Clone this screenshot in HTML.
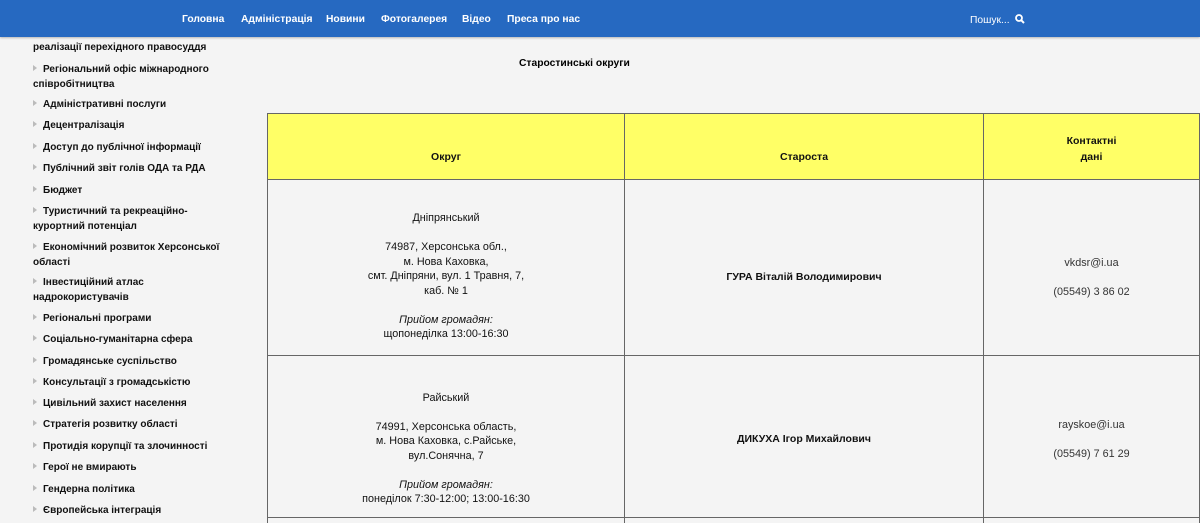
<!DOCTYPE html>
<html><head><meta charset="utf-8"><style>
*{margin:0;padding:0;box-sizing:border-box}
html,body{width:1200px;height:523px;overflow:hidden}
body{background:#f4f4f4;font-family:"Liberation Sans",Arial,sans-serif;position:relative}
.nav{position:absolute;left:0;top:0;width:1200px;height:37px;background:#2669c1;box-shadow:0 1px 2px rgba(0,0,0,.25);z-index:2}
.nav a{position:absolute;top:14px;color:#fff;font-size:10.3px;font-weight:bold;text-decoration:none;white-space:nowrap}
.side{position:absolute;left:33px;top:0;width:200px;font-size:10px;font-weight:bold;color:#111}
.it{position:absolute;left:0;line-height:14.5px;width:200px}
.it span.t{display:inline-block;width:0;height:0;border-left:4px solid #bbb;border-top:3.5px solid transparent;border-bottom:3.5px solid transparent;margin-right:6px;vertical-align:1px}
.title{position:absolute;left:519px;top:58px;font-size:10.3px;font-weight:bold}
table{position:absolute;left:267px;top:113px;border-collapse:collapse;font-size:10.8px;color:#111;table-layout:fixed;width:932px}
td{border:1px solid #666;text-align:center;vertical-align:middle}
.h td{background:#ffff66;height:66px;font-weight:bold;font-size:10.5px}
.r td{line-height:14.5px}
</style></head><body>
<div class="nav">
<a style="left:182px">Головна</a><a style="left:241px">Адміністрація</a><a style="left:326px">Новини</a><a style="left:381px">Фотогалерея</a><a style="left:462px">Відео</a><a style="left:507px">Преса про нас</a>
<a style="left:970px;font-weight:normal">Пошук... <svg width="10" height="10" viewBox="0 0 10 10" style="vertical-align:-1px;margin-left:2px"><circle cx="4" cy="4" r="3" fill="none" stroke="#fff" stroke-width="1.8"/><path d="M6.2 6.2L9 9" stroke="#fff" stroke-width="2"/></svg></a>
</div>
<div class="side">
<div class="it" style="top:41px">реалізації перехідного правосуддя</div>
<div class="it" style="top:63px"><span class="t"></span>Регіональний офіс міжнародного співробітництва</div>
<div class="it" style="top:98px"><span class="t"></span>Адміністративні послуги</div>
<div class="it" style="top:119px"><span class="t"></span>Децентралізація</div>
<div class="it" style="top:141px"><span class="t"></span>Доступ до публічної інформації</div>
<div class="it" style="top:162px"><span class="t"></span>Публічний звіт голів ОДА та РДА</div>
<div class="it" style="top:184px"><span class="t"></span>Бюджет</div>
<div class="it" style="top:205px"><span class="t"></span>Туристичний та рекреаційно-курортний потенціал</div>
<div class="it" style="top:241px"><span class="t"></span>Економічний розвиток Херсонської області</div>
<div class="it" style="top:276px"><span class="t"></span>Інвестиційний атлас надрокористувачів</div>
<div class="it" style="top:312px"><span class="t"></span>Регіональні програми</div>
<div class="it" style="top:333px"><span class="t"></span>Соціально-гуманітарна сфера</div>
<div class="it" style="top:355px"><span class="t"></span>Громадянське суспільство</div>
<div class="it" style="top:376px"><span class="t"></span>Консультації з громадськістю</div>
<div class="it" style="top:397px"><span class="t"></span>Цивільний захист населення</div>
<div class="it" style="top:418px"><span class="t"></span>Стратегія розвитку області</div>
<div class="it" style="top:440px"><span class="t"></span>Протидія корупції та злочинності</div>
<div class="it" style="top:461px"><span class="t"></span>Герої не вмирають</div>
<div class="it" style="top:483px"><span class="t"></span>Гендерна політика</div>
<div class="it" style="top:504px"><span class="t"></span>Європейська інтеграція</div>
</div>
<div class="title">Старостинські округи</div>
<table>
<colgroup><col style="width:357px"><col style="width:359px"><col style="width:216px"></colgroup>
<tr class="h"><td style="padding-top:20px">Округ</td><td style="padding-top:20px">Староста</td><td style="line-height:16px;padding-top:4px">Контактні<br>дані</td></tr>
<tr class="r"><td style="height:176px;padding-top:18px">Дніпрянський<br><br>74987, Херсонська обл.,<br>м. Нова Каховка,<br>смт. Дніпряни, вул. 1 Травня, 7,<br>каб. № 1<br><br><i>Прийом громадян:</i><br>щопонеділка 13:00-16:30</td><td style="font-weight:bold;font-size:10.5px;padding-top:20px">ГУРА Віталій Володимирович</td><td style="color:#333;padding-top:20px">vkdsr@i.ua<br><br>(05549) 3 86 02</td></tr>
<tr class="r"><td style="height:162px;padding-top:24px">Райський<br><br>74991, Херсонська область,<br>м. Нова Каховка, с.Райське,<br>вул.Сонячна, 7<br><br><i>Прийом громадян:</i><br>понеділок 7:30-12:00; 13:00-16:30</td><td style="font-weight:bold;font-size:10.5px;padding-top:6px">ДИКУХА Ігор Михайлович</td><td style="color:#333;padding-top:6px">rayskoe@i.ua<br><br>(05549) 7 61 29</td></tr>
<tr><td style="height:20px"></td><td></td><td></td></tr>
</table>
</body></html>
